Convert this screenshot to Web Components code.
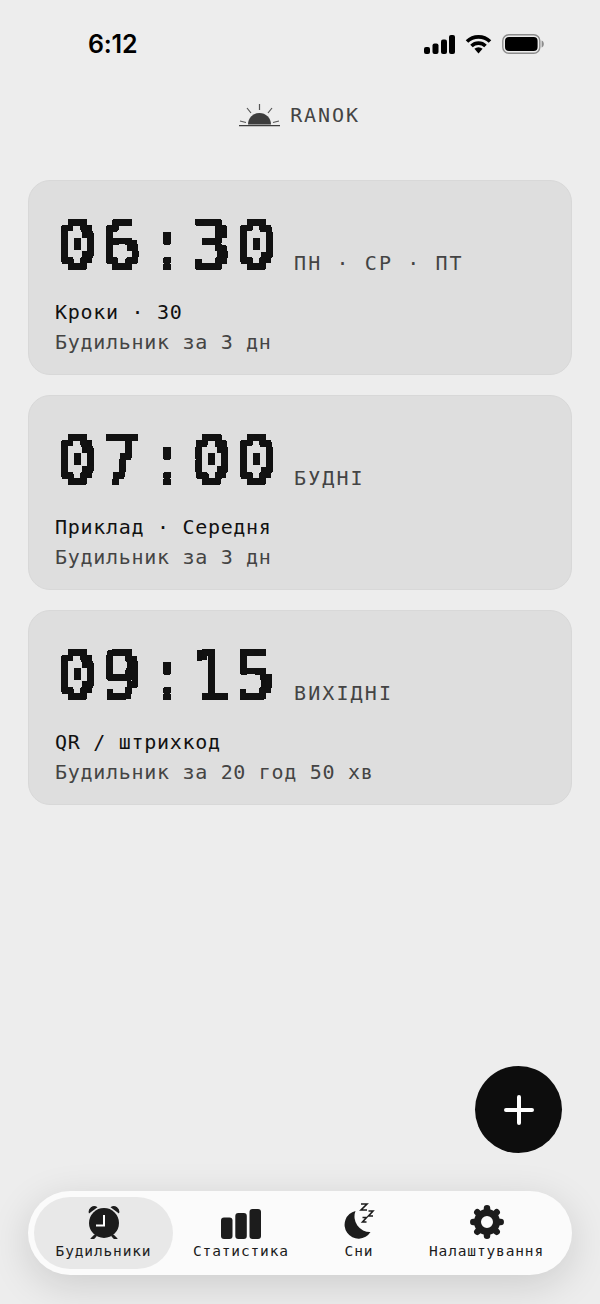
<!DOCTYPE html>
<html lang="uk">
  <head>
    <meta charset="UTF-8" />
    <meta name="viewport" content="width=device-width, initial-scale=1.0" />
    <title>Ranok</title>
    <style>
      html, body { margin: 0; background: #ededed; }
    </style>
  </head>
  <body>
    <phone-screen>
      <status-bar time="6:12"></status-bar>
      <brand-mark>RANOK</brand-mark>
      <alarm-list>
        <alarm-card time="06:30" days="ПН · СР · ПТ">
          <span slot="task">Кроки · 30</span>
          <span slot="next">Будильник за 3 дн</span>
        </alarm-card>
        <alarm-card time="07:00" days="БУДНІ">
          <span slot="task">Приклад · Середня</span>
          <span slot="next">Будильник за 3 дн</span>
        </alarm-card>
        <alarm-card time="09:15" days="ВИХІДНІ">
          <span slot="task">QR / штрихкод</span>
          <span slot="next">Будильник за 20 год 50 хв</span>
        </alarm-card>
      </alarm-list>
      <fab-button slot="overlay"></fab-button>
      <tab-bar slot="footer">
        <tab-item slot="active" icon="alarm" active>Будильники</tab-item>
        <tab-item icon="stats">Статистика</tab-item>
        <tab-item icon="sleep">Сни</tab-item>
        <tab-item icon="gear">Налаштування</tab-item>
      </tab-bar>
    </phone-screen>

    <script>
      const MONO = `"DejaVu Sans Mono", "Liberation Mono", monospace`;

      class PhoneScreen extends HTMLElement {
        connectedCallback() {
          this.attachShadow({ mode: "open" }).innerHTML = `
            <style>
              :host {
                display: flex;
                flex-direction: column;
                position: relative;
                width: 600px;
                height: 1304px;
                overflow: hidden;
                background: #ededed;
                font-family: ${MONO};
              }
              .main { flex: 1; }
              .footer { padding: 0 28px 29px; }
            </style>
            <div class="main"><slot></slot></div>
            <slot name="overlay"></slot>
            <div class="footer"><slot name="footer"></slot></div>
          `;
        }
      }

      class StatusBar extends HTMLElement {
        connectedCallback() {
          this.attachShadow({ mode: "open" }).innerHTML = `
            <style>
              :host {
                display: flex;
                justify-content: space-between;
                align-items: center;
                height: 30px;
                padding: 29px 56px 0 88px;
                color: #000;
              }
              .time { font: 600 25px/32px Inter, "Liberation Sans", sans-serif; letter-spacing: -0.2px; }
              .icons { display: flex; align-items: center; gap: 10px; }
              svg { display: block; }
            </style>
            <span class="time">${this.getAttribute("time")}</span>
            <div class="icons">
              <svg width="31" height="19" viewBox="0 0 31 19">
                <rect x="0" y="12" width="6" height="7" rx="2" />
                <rect x="8.500" y="8.500" width="6" height="10.500" rx="2" />
                <rect x="17" y="4.500" width="6" height="14.500" rx="2" />
                <rect x="25" y="0" width="6" height="19" rx="2" />
              </svg>
              <svg width="27" height="20" viewBox="0 0 27 20">
                <path d="M2 7.500a16.500 16.500 0 0 1 23 0M6.500 12a10 10 0 0 1 14 0" fill="none" stroke="#000" stroke-width="3.600" />
                <path d="M9.400 14.800a6 6 0 0 1 8.200 0L13.500 19.500z" />
              </svg>
              <svg width="42" height="20" viewBox="0 0 42 20">
                <rect x="0.800" y="0.800" width="37" height="18.400" rx="6" fill="none" stroke="#8c8c8c" stroke-width="1.400" />
                <rect x="3" y="3" width="32.600" height="14" rx="4" />
                <path d="M39.600 6.500c1.400.4 2.200 1.800 2.200 3.500s-.8 3.100-2.200 3.500z" fill="#8c8c8c" />
              </svg>
            </div>
          `;
        }
      }

      class BrandMark extends HTMLElement {
        connectedCallback() {
          this.attachShadow({ mode: "open" }).innerHTML = `
            <style>
              :host {
                display: flex;
                justify-content: center;
                align-items: center;
                gap: 10px;
                margin-top: 44px;
                height: 24px;
                padding-right: 1px;
                color: #444;
                font-size: 20px;
                letter-spacing: 1.900px;
                line-height: 24px;
              }
              svg { display: block; }
            </style>
            <svg width="41" height="24" viewBox="0 0 41 24">
              <path d="M9 21.500a11.500 11.500 0 0 1 23 0z" fill="#3d3d3d" />
              <path d="M0 22.700h41" stroke="#3d3d3d" stroke-width="1.300" />
              <path d="M20.500 1v6M8 5l4 5M33 5l-4 5M1 18l6 1.500M40 18l-6 1.500" stroke="#555" stroke-width="1.200" fill="none" />
            </svg>
            <span><slot></slot></span>
          `;
        }
      }

      class AlarmList extends HTMLElement {
        connectedCallback() {
          this.attachShadow({ mode: "open" }).innerHTML = `
            <style>
              :host {
                display: flex;
                flex-direction: column;
                gap: 20px;
                margin-top: 53px;
                padding: 0 28px;
              }
            </style>
            <slot></slot>
          `;
        }
      }

      class AlarmCard extends HTMLElement {
        connectedCallback() {
          this.attachShadow({ mode: "open" }).innerHTML = `
            <style>
              :host {
                display: block;
                box-sizing: border-box;
                height: 195px;
                padding: 26px 26px 0;
                background: #dedede;
                border: 1px solid #d8d8d8;
                border-radius: 22px;
              }
              .head { display: flex; height: 82px; }
              /* pixel look: the mask keeps one sample per 6.4px cell, the filter grows it to a block */
              .time {
                align-self: flex-end;
                margin: 0 0 4px 2px;
                filter: url(#pixel);
              }
              .digits {
                display: block;
                font-size: 65px;
                line-height: 76.800px;
                letter-spacing: 5.670px;
                color: #111;
                -webkit-text-stroke: 0.600px #111;
                white-space: nowrap;
                -webkit-mask-image: linear-gradient(90deg, #000 2.400px, transparent 2.400px), linear-gradient(#000 2.400px, transparent 2.400px);
                mask-image: linear-gradient(90deg, #000 2.400px, transparent 2.400px), linear-gradient(#000 2.400px, transparent 2.400px);
                -webkit-mask-size: 6.400px 6.400px;
                mask-size: 6.400px 6.400px;
                -webkit-mask-composite: source-in;
                mask-composite: intersect;
              }
              .days {
                align-self: flex-end;
                margin: 0 0 14px 13px;
                font-size: 20px;
                line-height: 24px;
                letter-spacing: 2.100px;
                color: #444;
              }
              .line { font-size: 20px; line-height: 30px; letter-spacing: 0.700px; white-space: nowrap; }
              .task { margin-top: 8px; color: #111; }
              .next { color: #444; }
              svg { position: absolute; width: 0; height: 0; }
            </style>
            <svg aria-hidden="true">
              <filter id="pixel" x="-5%" y="-5%" width="110%" height="110%" color-interpolation-filters="sRGB">
                <feComponentTransfer>
                  <feFuncA type="discrete" tableValues="0 1 1" />
                </feComponentTransfer>
                <feMorphology operator="dilate" radius="2" />
              </filter>
            </svg>
            <div class="head">
              <span class="time"><span class="digits">${this.getAttribute("time")}</span></span>
              <span class="days">${this.getAttribute("days")}</span>
            </div>
            <div class="line task"><slot name="task"></slot></div>
            <div class="line next"><slot name="next"></slot></div>
          `;
        }
      }

      class FabButton extends HTMLElement {
        connectedCallback() {
          this.attachShadow({ mode: "open" }).innerHTML = `
            <style>
              :host {
                position: absolute;
                left: 475px;
                top: 1066px;
                width: 87px;
                height: 87px;
                display: grid;
                place-items: center;
                border-radius: 50%;
                background: #0d0d0d;
              }
            </style>
            <svg width="32" height="32" viewBox="0 0 32 32">
              <path d="M16 3v26M3 16h26" stroke="#fff" stroke-width="4" stroke-linecap="round" />
            </svg>
          `;
        }
      }

      class TabBar extends HTMLElement {
        connectedCallback() {
          this.attachShadow({ mode: "open" }).innerHTML = `
            <style>
              :host {
                display: flex;
                gap: 20px;
                box-sizing: border-box;
                height: 84px;
                padding: 6px 28px 6px 6px;
                border-radius: 42px;
                background: #fbfbfb;
                box-shadow: 0 10px 40px rgba(0, 0, 0, 0.14);
              }
              .rest { flex: 1; display: flex; justify-content: space-between; }
            </style>
            <slot name="active"></slot>
            <div class="rest"><slot></slot></div>
          `;
        }
      }

      const TAB_ICONS = {
        alarm: `<svg width="34" height="34" viewBox="0 0 34 34" fill="#1c1c1c">
            <circle cx="17" cy="18" r="15" />
            <path d="M2 8.500a5.500 5.500 0 0 1 8.500-6.200zM32 8.500a5.500 5.500 0 0 0-8.500-6.200z" />
            <path d="M8 31l-3 3M26 31l3 3" stroke="#1c1c1c" stroke-width="3" stroke-linecap="round" />
            <path d="M17 10v10.500H9" fill="none" stroke="#fff" stroke-width="2" />
          </svg>`,
        stats: `<svg width="40" height="30" viewBox="0 0 40 30" fill="#1c1c1c">
            <rect x="0" y="8.500" width="11.500" height="21.500" rx="3" />
            <rect x="14.300" y="4" width="11.500" height="26" rx="3" />
            <rect x="28.500" y="0" width="11.500" height="30" rx="3" />
          </svg>`,
        sleep: `<svg width="32" height="36" viewBox="0 0 32 36" fill="#1c1c1c">
            <path d="M12.500 8A14 14 0 1 0 27.500 29 15.500 15.500 0 0 1 12.500 8z" />
            <path d="M18 1h6l-6 6h6M25.500 8h4.500l-4.500 5h4.500M19.500 14.500h4l-4 4.500h4" fill="none" stroke="#1c1c1c" stroke-width="1.600" />
          </svg>`,
        gear: `<svg width="34" height="34" viewBox="0 0 34 34">
            <circle cx="17" cy="17" r="9.500" fill="none" stroke="#1c1c1c" stroke-width="7" />
            <g stroke="#1c1c1c" stroke-width="6.500" stroke-linecap="round">
              <path d="M17 3.300v2M17 28.700v2M3.300 17h2M28.700 17h2M7.300 7.300l1.400 1.400M25.300 25.300l1.400 1.400M26.700 7.300l-1.400 1.400M8.700 25.300l-1.400 1.400" />
            </g>
          </svg>`,
      };

      class TabItem extends HTMLElement {
        connectedCallback() {
          this.attachShadow({ mode: "open" }).innerHTML = `
            <style>
              :host {
                display: flex;
                flex-direction: column;
                align-items: center;
                justify-content: flex-end;
                height: 72px;
                color: #1c1c1c;
                font-size: 14.500px;
                letter-spacing: 0.850px;
                line-height: 18px;
                white-space: nowrap;
              }
              :host([active]) {
                width: 139px;
                border-radius: 36px;
                background: #e8e8e8;
              }
              .icon { height: 36px; display: flex; align-items: flex-end; margin-bottom: 3px; }
              .label { padding-bottom: 9px; }
              svg { display: block; }
            </style>
            <div class="icon">${TAB_ICONS[this.getAttribute("icon")]}</div>
            <div class="label"><slot></slot></div>
          `;
        }
      }

      customElements.define("phone-screen", PhoneScreen);
      customElements.define("status-bar", StatusBar);
      customElements.define("brand-mark", BrandMark);
      customElements.define("alarm-list", AlarmList);
      customElements.define("alarm-card", AlarmCard);
      customElements.define("fab-button", FabButton);
      customElements.define("tab-bar", TabBar);
      customElements.define("tab-item", TabItem);
    </script>
  </body>
</html>
